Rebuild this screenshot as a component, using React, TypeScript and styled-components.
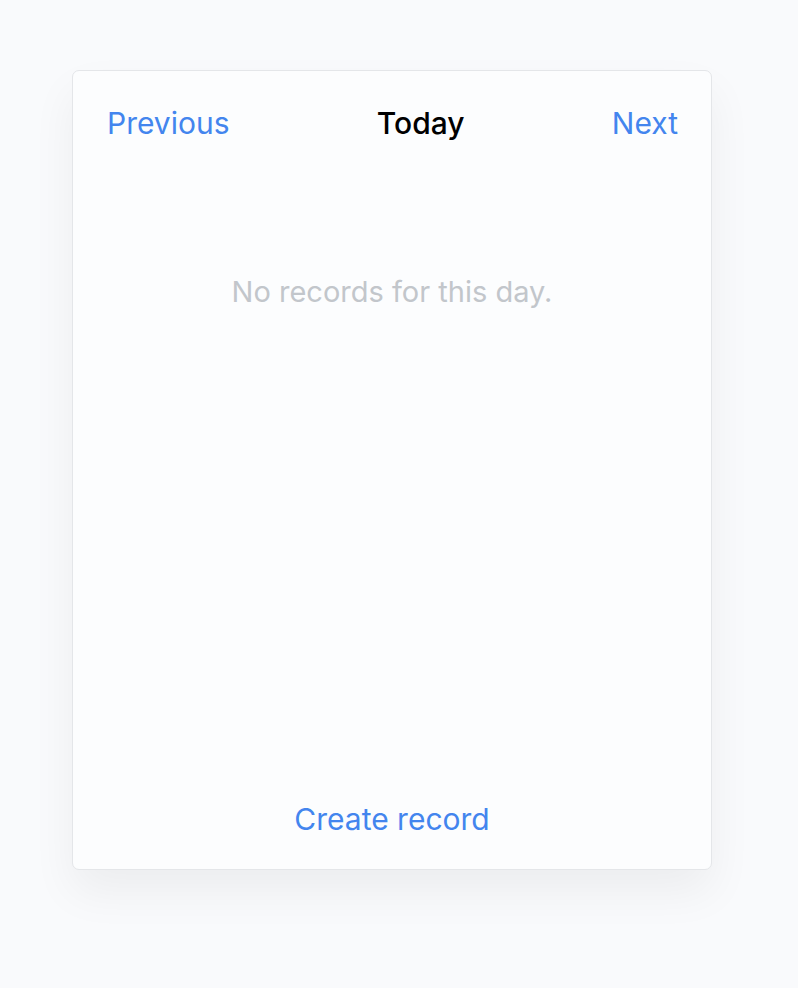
import React from "react";
import styled, { createGlobalStyle } from "styled-components";

const Global = createGlobalStyle`
  html, body { margin: 0; padding: 0; background: #f9fafc; }
  body { font-family: Inter, "Noto Sans", sans-serif; }
`;

const Page = styled.div`
  min-height: 100vh;
  box-sizing: border-box;
  padding: 70px 86px 60px 72px;
`;

const Card = styled.div`
  width: 638px;
  height: 798px;
  background: #fcfdfe;
  border: 1px solid #e4e6e9;
  border-radius: 7px;
  box-shadow: 0 22px 45px rgba(0, 0, 0, 0.055);
  display: flex;
  flex-direction: column;
`;

const Header = styled.div`
  display: flex;
  justify-content: space-between;
  align-items: center;
  padding: 32px 33px 0 34px;
  height: 40px;
`;

const LinkButton = styled.button`
  background: none;
  border: none;
  padding: 0;
  font: inherit;
  font-size: 30px;
  color: #4385ee;
  cursor: pointer;
`;

const Title = styled.div`
  font-size: 30px;
  font-weight: 550;
  color: #000;
`;

const Empty = styled.div`
  flex: 1;
  text-align: center;
  padding-top: 131px;
  font-size: 29px;
  color: #c2c6cb;
`;

const Footer = styled.div`
  display: flex;
  justify-content: center;
  padding-bottom: 32px;
`;

export default function App() {
  return (
    <>
      <Global />
      <Page>
        <Card>
          <Header>
            <LinkButton>Previous</LinkButton>
            <Title>Today</Title>
            <LinkButton>Next</LinkButton>
          </Header>
          <Empty>No records for this day.</Empty>
          <Footer>
            <LinkButton>Create record</LinkButton>
          </Footer>
        </Card>
      </Page>
    </>
  );
}
